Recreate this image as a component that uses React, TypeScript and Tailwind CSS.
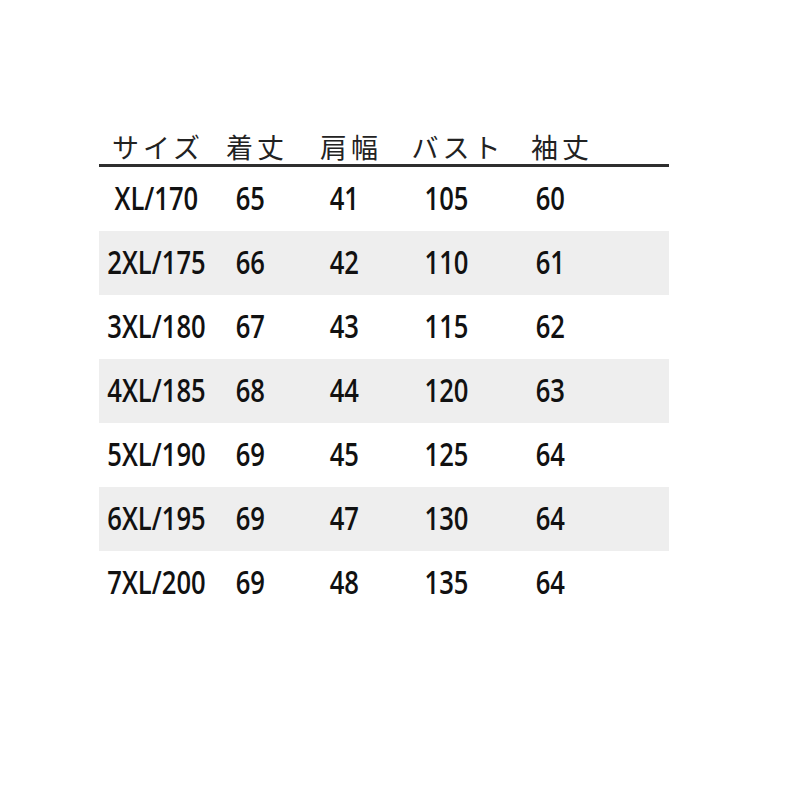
const rows = [
  ["XL/170", "65", "41", "105", "60"],
  ["2XL/175", "66", "42", "110", "61"],
  ["3XL/180", "67", "43", "115", "62"],
  ["4XL/185", "68", "44", "120", "63"],
  ["5XL/190", "69", "45", "125", "64"],
  ["6XL/195", "69", "47", "130", "64"],
  ["7XL/200", "69", "48", "135", "64"],
];

const heads = ["サイズ", "着丈", "肩幅", "バスト", "袖丈"];

function Num({ children }: { children: React.ReactNode }) {
  return (
    <div className="flex items-center justify-center pb-[2px]">
      <span className="inline-block scale-x-[0.8] whitespace-nowrap text-[32px] font-semibold leading-none text-[#111]">
        {children}
      </span>
    </div>
  );
}

export default function App() {
  return (
    <div className="h-[800px] w-[800px] bg-white font-['Open_Sans','Liberation_Sans',sans-serif]">
      <div className="ml-[99px] w-[570px] pt-[130px]">
        <div className="grid h-[37px] grid-cols-[118px_80px_108px_106px_102px_1fr] items-center border-b-[3px] border-[#2e2e2e] pb-[2px] font-['Noto_Sans_CJK_JP',sans-serif] text-[27px] leading-none tracking-[4px] text-[#222]">
          {heads.map((h) => (
            <span key={h} className="whitespace-nowrap text-center">
              {h}
            </span>
          ))}
          <span />
        </div>
        {rows.map((r, i) => (
          <div
            key={r[0]}
            className={`grid h-[64px] grid-cols-[114px_74px_114px_90px_118px_1fr] ${i % 2 === 1 ? "bg-[#eeeeee]" : "bg-white"}`}
          >
            {r.map((c, j) => (
              <Num key={j}>{c}</Num>
            ))}
            <span />
          </div>
        ))}
      </div>
    </div>
  );
}
